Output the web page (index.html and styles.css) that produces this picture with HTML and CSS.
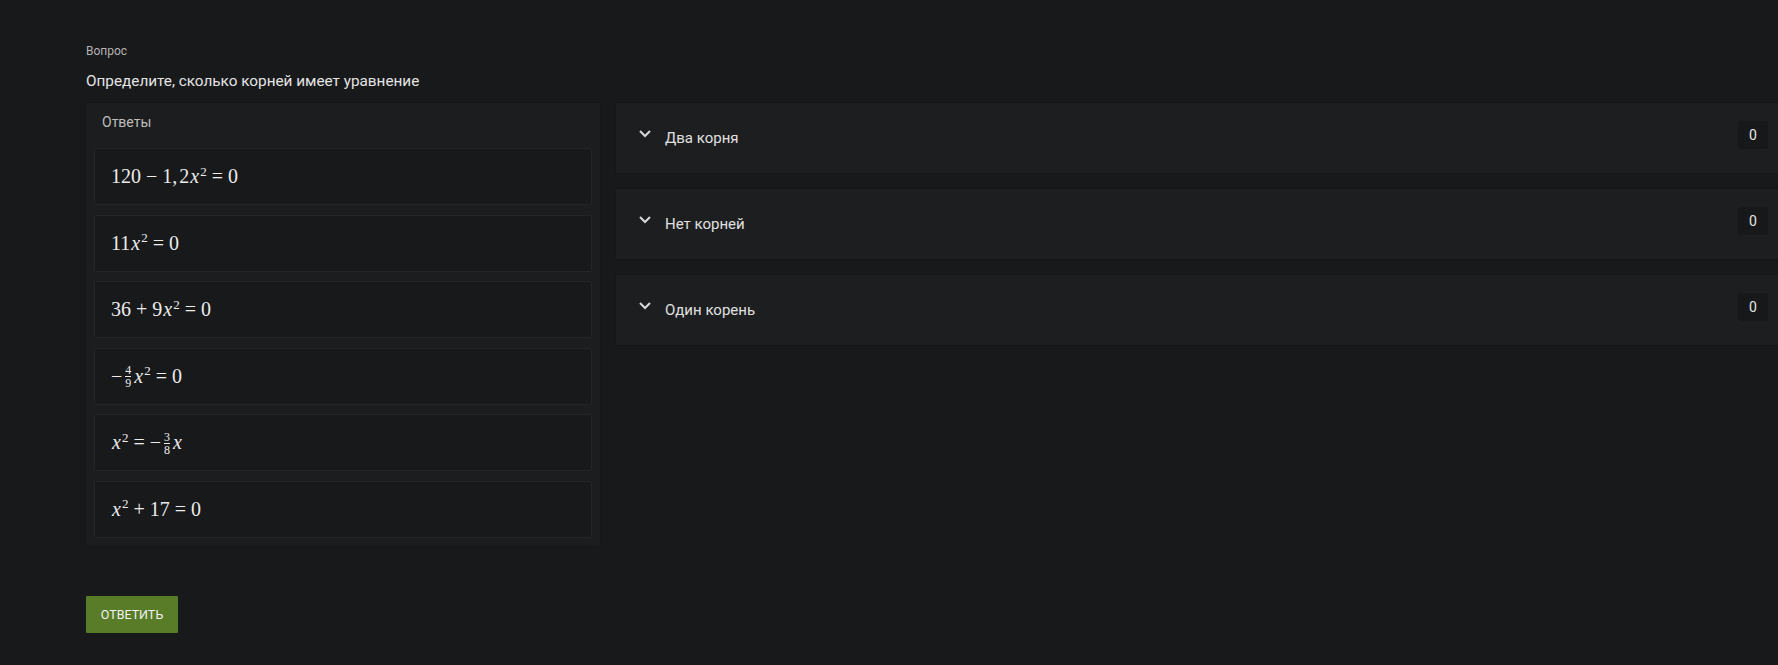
FILE: index.html
```html
<!DOCTYPE html>
<html lang="ru">
<head>
<meta charset="utf-8">
<title>Вопрос</title>
<link rel="stylesheet" href="styles.css">
</head>
<body>
<div class="page">
  <div class="label">Вопрос</div>
  <div class="question">Определите, сколько корней имеет уравнение</div>
  <div class="row">
    <div class="answers">
      <div class="answers-head">Ответы</div>
      <div class="cards">
        <div class="card"><span class="math">120 <span class="op">−</span> 1,<span class="sp"></span>2<i>x</i><sup>2</sup> <span class="op">=</span> 0</span></div>
        <div class="card"><span class="math">11<i>x</i><sup>2</sup> <span class="op">=</span> 0</span></div>
        <div class="card"><span class="math">36 <span class="op">+</span> 9<i>x</i><sup>2</sup> <span class="op">=</span> 0</span></div>
        <div class="card"><span class="math"><span class="op neg">−</span><span class="frac"><span>4</span><span class="den">9</span></span><i>x</i><sup>2</sup> <span class="op">=</span> 0</span></div>
        <div class="card"><span class="math"><i>x</i><sup>2</sup> <span class="op">=</span> <span class="op neg">−</span><span class="frac"><span>3</span><span class="den">8</span></span><i>x</i></span></div>
        <div class="card"><span class="math"><i>x</i><sup>2</sup> <span class="op">+</span> 17 <span class="op">=</span> 0</span></div>
      </div>
    </div>
    <div class="groups">
      <div class="group">
        <svg class="chev" viewBox="0 0 14 9" width="14" height="9"><path d="M2 2 L7 7 L12 2" fill="none" stroke="#d8d8d8" stroke-width="2"/></svg>
        <span class="group-title">Два корня</span>
        <span class="badge">0</span>
      </div>
      <div class="group">
        <svg class="chev" viewBox="0 0 14 9" width="14" height="9"><path d="M2 2 L7 7 L12 2" fill="none" stroke="#d8d8d8" stroke-width="2"/></svg>
        <span class="group-title">Нет корней</span>
        <span class="badge">0</span>
      </div>
      <div class="group">
        <svg class="chev" viewBox="0 0 14 9" width="14" height="9"><path d="M2 2 L7 7 L12 2" fill="none" stroke="#d8d8d8" stroke-width="2"/></svg>
        <span class="group-title">Один корень</span>
        <span class="badge">0</span>
      </div>
    </div>
  </div>
  <button class="submit">Ответить</button>
</div>
</body>
</html>
```
FILE: styles.css
```css
html, body {
  margin: 0;
  padding: 0;
  background: #18191b;
}
body {
  font-family: Roboto, "Liberation Sans", sans-serif;
  color: #e2e2e2;
}
.page {
  padding: 43px 0 0 86px;
}
.label {
  font-size: 12px;
  line-height: 16px;
  color: #b4b4b4;
}
.question {
  margin-top: 12px;
  font-size: 15.3px;
  line-height: 20px;
  color: #e4e4e4;
}
.row {
  display: flex;
  gap: 16px;
  margin-top: 12px;
  align-items: flex-start;
}
.answers {
  width: 514px;
  flex: none;
  background: #1c1d1f;
  box-shadow: 0 0 2px rgba(0,0,0,0.35);
  padding: 0 8px 8px 8px;
  box-sizing: border-box;
}
.answers-head {
  height: 45px;
  box-sizing: border-box;
  padding: 10px 0 0 8px;
  line-height: 18px;
  font-size: 14px;
  color: #bdbdbd;
}
.cards {
  display: flex;
  flex-direction: column;
  gap: 9.6px;
}
.card {
  height: 57px;
  box-sizing: border-box;
  background: #18191b;
  border: 1px solid #242528;
  border-radius: 2px;
  display: flex;
  align-items: center;
  padding-left: 16px;
}
.math {
  font-family: "Liberation Serif", "Times New Roman", serif;
  font-size: 20px;
  color: #ececec;
  white-space: nowrap;
  display: inline-flex;
  align-items: center;
}
.math i {
  font-style: italic;
  margin-left: 1px;
}
.math sup {
  font-size: 13px;
  position: relative;
  top: -5px;
  line-height: 0;
  margin-left: 1px;
}
.math .op {
  margin: 0 5px;
}
.math .op.neg {
  margin: 0 3px 0 0;
}
.math .sp {
  display: inline-block;
  width: 2px;
}
.frac {
  display: inline-flex;
  flex-direction: column;
  align-items: center;
  font-size: 12px;
  line-height: 11px;
  margin: 0 2px 0 0;
  position: relative;
  top: 1px;
}
.frac .den {
  border-top: 1px solid #ececec;
  padding-top: 1px;
}
.groups {
  flex: 1;
  display: flex;
  flex-direction: column;
  gap: 16px;
}
.group {
  height: 70px;
  background: #1d1e20;
  box-shadow: 0 0 2px rgba(0,0,0,0.35);
  display: flex;
  align-items: center;
  padding: 0 10px 0 22px;
  position: relative;
}
.chev {
  flex: none;
  position: relative;
  top: -5px;
}
.group-title {
  margin-left: 13px;
  font-size: 15px;
  color: #e0e0e0;
  flex: 1;
}
.badge {
  width: 30px;
  height: 28px;
  background: #17181a;
  border-radius: 3px;
  display: flex;
  align-items: center;
  justify-content: center;
  font-size: 14px;
  color: #e6e6e6;
  position: relative;
  top: -3px;
}
.submit {
  margin-top: 50px;
  height: 37px;
  width: 92px;
  border: none;
  border-radius: 1px;
  background: #587c28;
  color: #f2f2f2;
  font-family: Roboto, "Liberation Sans", sans-serif;
  font-size: 12.5px;
  text-transform: uppercase;
  padding: 0;
  cursor: pointer;
}
```
